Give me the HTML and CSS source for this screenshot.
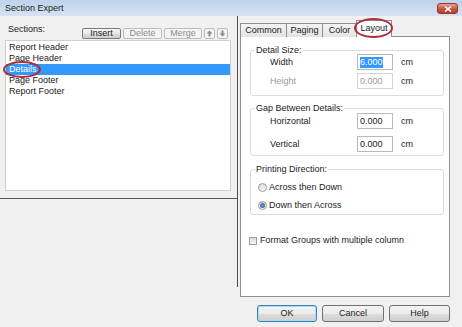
FILE: index.html
```html
<!doctype html>
<html lang="en">
	<head>
		<meta charset="utf-8">
		<link rel="stylesheet" href="styles.css">
		<title>Section Expert</title>
	</head>
	<body>
	<div class="window">
		<div class="titlebar">
			<span class="title">Section Expert</span>
			<span class="close"><svg width="8" height="6" viewBox="0 0 8 6"><path d="M1 0.5 L7 5.5 M7 0.5 L1 5.5" stroke="#fff" stroke-width="1.6"/></svg></span>
		</div>
		<div class="main">
			<div class="left">
				<div class="left-head">
					<span class="label">Sections:</span>
					<div class="tools">
						<button class="btn w-insert">Insert</button>
						<button class="btn off w-delete">Delete</button>
						<button class="btn off w-merge">Merge</button>
						<button class="btn off arrow"><svg width="7" height="7" viewBox="0 0 7 7"><path d="M3.5 0.5 L6.5 3.5 H4.5 V6.5 H2.5 V3.5 H0.5 Z" fill="#8c8c8c"/></svg></button>
						<button class="btn off arrow"><svg width="7" height="7" viewBox="0 0 7 7"><path d="M3.5 6.5 L6.5 3.5 H4.5 V0.5 H2.5 V3.5 H0.5 Z" fill="#8c8c8c"/></svg></button>
					</div>
				</div>
				<ul class="list">
					<li>Report Header</li>
					<li>Page Header</li>
					<li class="sel">Details<span class="mark mark-row"></span></li>
					<li>Page Footer</li>
					<li>Report Footer</li>
				</ul>
			</div>
			<div class="divider"></div>
			<div class="right">
				<div class="tabs">
					<div class="tab t-common">Common</div>
					<div class="tab t-paging">Paging</div>
					<div class="tab t-color">Color</div>
					<div class="tab on t-layout">Layout<span class="mark mark-tab"></span></div>
				</div>
				<div class="pane">
					<fieldset class="group size">
						<legend>Detail Size:</legend>
						<div class="field">
							<span class="name">Width</span>
							<span class="box"><span class="hl">6.000</span></span>
							<span class="unit">cm</span>
						</div>
						<div class="field dim">
							<span class="name">Height</span>
							<span class="box">0.000</span>
							<span class="unit">cm</span>
						</div>
					</fieldset>
					<fieldset class="group gap">
						<legend>Gap Between Details:</legend>
						<div class="field">
							<span class="name">Horizontal</span>
							<span class="box">0.000</span>
							<span class="unit">cm</span>
						</div>
						<div class="field">
							<span class="name">Vertical</span>
							<span class="box">0.000</span>
							<span class="unit">cm</span>
						</div>
					</fieldset>
					<fieldset class="group dir">
						<legend>Printing Direction:</legend>
						<div class="option"><span class="radio"></span>Across then Down</div>
						<div class="option"><span class="radio checked"></span>Down then Across</div>
					</fieldset>
					<div class="check-row"><span class="check"></span>Format Groups with multiple column</div>
				</div>
				<div class="actions">
					<button class="push default w-ok">OK</button>
					<button class="push w-cancel">Cancel</button>
					<button class="push w-help">Help</button>
				</div>
			</div>
		</div>
	</div>
	</body>
</html>
```

FILE: styles.css
```css
body {
	background: #f0f0f0;
	color: #1b1b1b;
	font: 9px/11px 'Liberation Sans', Arial, sans-serif;
	margin: 0;
}

.window {
	display: flex;
	flex-direction: column;
	height: 327px;
	overflow: hidden;
	width: 462px;
}

.titlebar {
	background: linear-gradient(#c0d3ea, #d5e2f2);
	display: flex;
	flex: none;
	height: 16px;
	justify-content: space-between;
	padding-left: 5px;
}

.title {
	line-height: 16px;
}

.close {
	align-items: center;
	background: linear-gradient(#e4a396, #c9503f 55%, #b8402f);
	border: 1px solid #8c3a30;
	border-radius: 3px;
	box-sizing: border-box;
	display: flex;
	height: 11px;
	justify-content: center;
	margin: 3px 4px 0 0;
	width: 21px;
}

.main {
	align-items: flex-start;
	display: flex;
	flex: 1;
}

/* left side */
.left {
	border-bottom: 1px solid #555;
	box-sizing: border-box;
	height: 183px;
	padding: 8px 6px 7px 5px;
	width: 237px;
}

.left-head {
	display: flex;
	height: 16px;
	justify-content: space-between;
}

.left-head .label {
	margin-left: 3px;
}

.tools {
	display: flex;
	gap: 2px;
	margin: 4px 3px 0 0;
}

.btn {
	align-items: center;
	background: linear-gradient(#f6f6f6, #e9e9e9 50%, #dcdcdc 51%, #d0d0d0);
	border: 1px solid #7a7a7a;
	border-radius: 2px;
	box-sizing: border-box;
	color: #1b1b1b;
	display: flex;
	font: inherit;
	height: 11px;
	justify-content: center;
	line-height: 9px;
	padding: 0;
}

.btn.off {
	background: #f4f4f4;
	border-color: #bcbcbc;
	color: #8d8d8d;
}

.w-insert { width: 39px; }
.w-delete { width: 39px; }
.w-merge { width: 38px; }
.arrow { width: 11px; }

.list {
	background: #fff;
	border: 1px solid #cfcfcf;
	box-sizing: border-box;
	height: 151px;
	list-style: none;
	margin: 0;
	padding: 1px 0 0;
}

.list li {
	height: 11px;
	line-height: 11px;
	padding-left: 3px;
	position: relative;
}

.list li.sel {
	background: #3399ff;
	color: #fff;
}

.mark {
	border: 2px solid #a9303a;
	border-radius: 50%;
	box-sizing: border-box;
	position: absolute;
}

.mark-row {
	height: 17px;
	left: -3px;
	top: -3px;
	width: 38px;
}

.divider {
	background: #4e4e4e;
	flex: none;
	height: 271px;
	width: 1px;
}

/* right side */
.right {
	box-sizing: border-box;
	padding-left: 2px;
	width: 224px;
}

.tabs {
	align-items: flex-end;
	display: flex;
	height: 21px;
	margin-bottom: -1px;
	position: relative;
	z-index: 1;
}

.tab {
	background: linear-gradient(#f3f3f3, #e3e3e3);
	border: 1px solid #8e8f8f;
	border-bottom: none;
	box-sizing: border-box;
	height: 14px;
	line-height: 12px;
	margin-right: -1px;
	text-align: center;
}

.tab.on {
	background: #fff;
	height: 17px;
	line-height: 15px;
	position: relative;
}

.t-common { width: 47px; }
.t-paging { width: 37px; }
.t-color { width: 35px; }
.t-layout { width: 36px; }

.mark-tab {
	height: 20px;
	left: -3px;
	top: -3px;
	width: 39px;
}

.pane {
	background: #fff;
	border: 1px solid #8e8f8f;
	box-sizing: border-box;
	height: 261px;
	width: 210px;
}

.group {
	border: 1px solid #dcdcdc;
	border-radius: 3px;
	margin: 9px 5px 0 9px;
	min-width: 0;
	padding: 0;
}

.group legend {
	line-height: 8px;
	margin-left: 4px;
	padding: 0 1px;
}

.size {
	padding-bottom: 6px;
}

.size .field + .field {
	margin-top: 3px;
}

.gap {
	margin-top: 8px;
	padding: 1px 0 3px;
}

.gap .field + .field {
	margin-top: 7px;
}

.dir {
	padding: 6px 0 1px;
}

.dir .option + .option {
	margin-top: 2px;
}

.field {
	align-items: center;
	display: flex;
	height: 16px;
	padding-left: 19px;
}

.field .name {
	width: 87px;
}

.box {
	background: #fff;
	border: 1px solid #b7b9be;
	box-sizing: border-box;
	height: 16px;
	line-height: 14px;
	padding-left: 2px;
	width: 36px;
}

.hl {
	background: #3399ff;
	color: #fff;
	display: inline-block;
	line-height: 11px;
}

.unit {
	margin-left: 8px;
}

.dim .name, .dim .box {
	color: #9a9a9a;
}

.dim .box {
	border-color: #d4d5d8;
}

.option {
	align-items: center;
	display: flex;
	height: 16px;
	padding-left: 7px;
}

.radio {
	background: linear-gradient(#dcdcdc, #fafafa);
	border: 1px solid #9a9a9a;
	border-radius: 50%;
	box-sizing: border-box;
	height: 9px;
	margin-right: 2px;
	position: relative;
	width: 9px;
}

.radio.checked::after {
	background: radial-gradient(#6ea0d8, #1c4f8c);
	border-radius: 50%;
	content: "";
	height: 5px;
	left: 1px;
	position: absolute;
	top: 1px;
	width: 5px;
}

.check-row {
	align-items: center;
	display: flex;
	height: 13px;
	margin: 19px 0 0 8px;
}

.check {
	background: linear-gradient(#dcdcdc, #f6f6f6);
	border: 1px solid #9e9e9e;
	box-sizing: border-box;
	height: 8px;
	margin-right: 3px;
	width: 8px;
}

.actions {
	display: flex;
	gap: 5px;
	justify-content: flex-end;
	margin-top: 8px;
	width: 210px;
}

.push {
	background: linear-gradient(#f4f4f4, #ebebeb 50%, #dddddd 51%, #cfcfcf);
	border: 1px solid #707070;
	border-radius: 3px;
	color: #1b1b1b;
	font: inherit;
	height: 17px;
	padding: 0;
}

.push.default {
	border-color: #3c7fb1;
	box-shadow: inset 0 0 0 1px #a9dbf6;
}

.w-ok { width: 60px; }
.w-cancel { width: 62px; }
.w-help { width: 61px; }
```
